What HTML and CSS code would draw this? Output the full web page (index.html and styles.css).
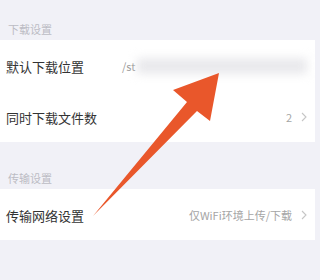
FILE: index.html
```html
<!DOCTYPE html>
<html lang="zh">
<head>
<meta charset="utf-8">
<link rel="stylesheet" href="styles.css">
</head>
<body>
<div class="page">
  <div class="section-title first">下载设置</div>
  <div class="group">
    <div class="row">
      <span class="label">默认下载位置</span>
      <span class="path">/st<span class="smudge"></span></span>
    </div>
    <div class="row">
      <span class="label">同时下载文件数</span>
      <span class="value">2<svg class="chev" width="6" height="10" viewBox="0 0 6 10"><polyline points="1,1 5,5 1,9" fill="none" stroke="#c6c6c6" stroke-width="1.1"/></svg></span>
    </div>
  </div>
  <div class="section-title second">传输设置</div>
  <div class="group">
    <div class="row">
      <span class="label">传输网络设置</span>
      <span class="value">仅WiFi环境上传/下载<svg class="chev" width="6" height="10" viewBox="0 0 6 10"><polyline points="1,1 5,5 1,9" fill="none" stroke="#c6c6c6" stroke-width="1.1"/></svg></span>
    </div>
  </div>
  <svg class="arrow" width="315" height="280" viewBox="0 0 315 280">
    <polygon points="219,73 173,90 187,102 93,216 197,111 210,121" fill="#e9572b"/>
  </svg>
</div>
</body>
</html>
```
FILE: styles.css
```css
html, body {
  margin: 0;
  padding: 0;
  background: #f1f1f7;
}
.page {
  position: relative;
  width: 315px;
  height: 280px;
  overflow: hidden;
  font-family: "Noto Sans CJK SC", "Noto Sans", sans-serif;
}
.section-title {
  box-sizing: border-box;
  padding-left: 8px;
  font-size: 11px;
  line-height: 14px;
  color: #bcbcc4;
}
.section-title.first {
  height: 40px;
  padding-top: 22px;
}
.section-title.second {
  height: 47px;
  padding-top: 29px;
}
.group {
  background: #ffffff;
}
.row {
  height: 51px;
  display: flex;
  align-items: center;
  justify-content: space-between;
  padding: 1px 8px 0 6px;
  box-sizing: border-box;
}
.label {
  flex-shrink: 0;
  white-space: nowrap;
  font-size: 13px;
  color: #333333;
}
.path {
  flex: 1;
  display: flex;
  align-items: center;
  margin-left: 38px;
  font-size: 11px;
  color: #9a9a9a;
  white-space: nowrap;
}
.smudge {
  display: block;
  flex: 1;
  height: 16px;
  margin-left: 2px;
  background: #e9e9ec;
  filter: blur(5px);
}
.value {
  display: flex;
  align-items: center;
  font-size: 11px;
  color: #a5a5a5;
  white-space: nowrap;
}
.chev {
  display: block;
  margin-left: 9px;
}
.arrow {
  position: absolute;
  left: 0;
  top: 0;
}
```
